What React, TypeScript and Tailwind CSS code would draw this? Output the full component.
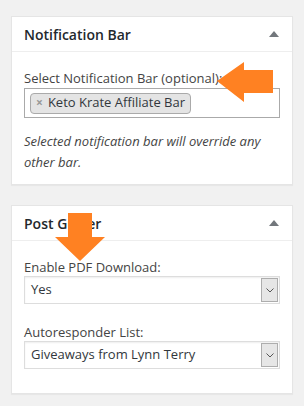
import React from 'react'

const font = { fontFamily: '"Open Sans", "Noto Sans", sans-serif' }

function Caret() {
  return (
    <svg width="10" height="6" viewBox="0 0 10 6" className="block">
      <path d="M5 0 L10 6 L0 6 Z" fill="#72777c" />
    </svg>
  )
}

function Select({ value }: { value: string }) {
  return (
    <div className="flex h-[28px] items-stretch border border-[#dddddd] bg-white shadow-[inset_0_1px_2px_rgba(0,0,0,0.07)]">
      <div className="flex flex-1 items-center pl-[6px] text-[13px] text-[#32373c]">{value}</div>
      <div className="m-[1px] flex w-[17px] items-center justify-center border border-[#adadad] bg-[#e6e6e6]">
        <svg width="8" height="5" viewBox="0 0 8 5">
          <path d="M0.5 0.5 L4 4 L7.5 0.5" fill="none" stroke="#555" strokeWidth="1" />
        </svg>
      </div>
    </div>
  )
}

function Panel({ title, children }: { title: React.ReactNode; children: React.ReactNode }) {
  return (
    <div className="border border-[#e5e5e5] bg-white shadow-[0_1px_1px_rgba(0,0,0,0.04)]">
      <div className="flex h-[35px] items-center justify-between border-b border-[#eeeeee] px-[12px]">
        <h2 className="text-[14px] font-semibold text-[#23282d]">{title}</h2>
        <div className="mr-[1px]">
          <Caret />
        </div>
      </div>
      <div className="px-[12px]">{children}</div>
    </div>
  )
}

export default function App() {
  return (
    <div className="relative h-[406px] w-[304px] overflow-hidden bg-[#f1f1f1] px-[11px] pt-[16px]" style={font}>
      <Panel title="Notification Bar">
        <div className="pt-[17px] text-[13px] leading-[18px] text-[#444]">Select Notification Bar (optional):</div>
        <div className="mt-[1px] flex h-[30px] items-center border border-[#aaaaaa] px-[5px]">
          <div className="flex h-[21px] items-center gap-[5px] rounded-[4px] border border-[#aaaaaa] bg-[#e4e4e4] px-[5px] text-[13px] text-[#32373c]">
            <span className="text-[12px] font-bold text-[#999]">×</span>
            <span>Keto Krate Affiliate Bar</span>
          </div>
        </div>
        <p className="pb-[11px] pt-[13px] text-[13px] italic leading-[21px] text-[#444]">
          Selected notification bar will override any other bar.
        </p>
      </Panel>

      <div className="mt-[20px]">
        <Panel title="Post Gutter">
          <div className="pt-[17px] text-[13px] leading-[18px] text-[#444]">Enable PDF Download:</div>
          <Select value="Yes" />
          <div className="pt-[19px] text-[13px] leading-[18px] text-[#444]">Autoresponder List:</div>
          <Select value="Giveaways from Lynn Terry" />
          <div className="h-[24px]" />
        </Panel>
      </div>

      <svg className="absolute left-[216px] top-[61px]" width="58" height="42" viewBox="0 0 58 42">
        <path d="M1 20 L28 1 L28 9 L57 9 L57 32 L28 32 L28 41 Z" fill="#ff8122" />
      </svg>
      <svg className="absolute left-[54px] top-[212px]" width="52" height="50" viewBox="0 0 52 50">
        <path d="M14 1 L38 1 L38 25 L51 25 L26 49 L1 25 L14 25 Z" fill="#ff8122" />
      </svg>
    </div>
  )
}
